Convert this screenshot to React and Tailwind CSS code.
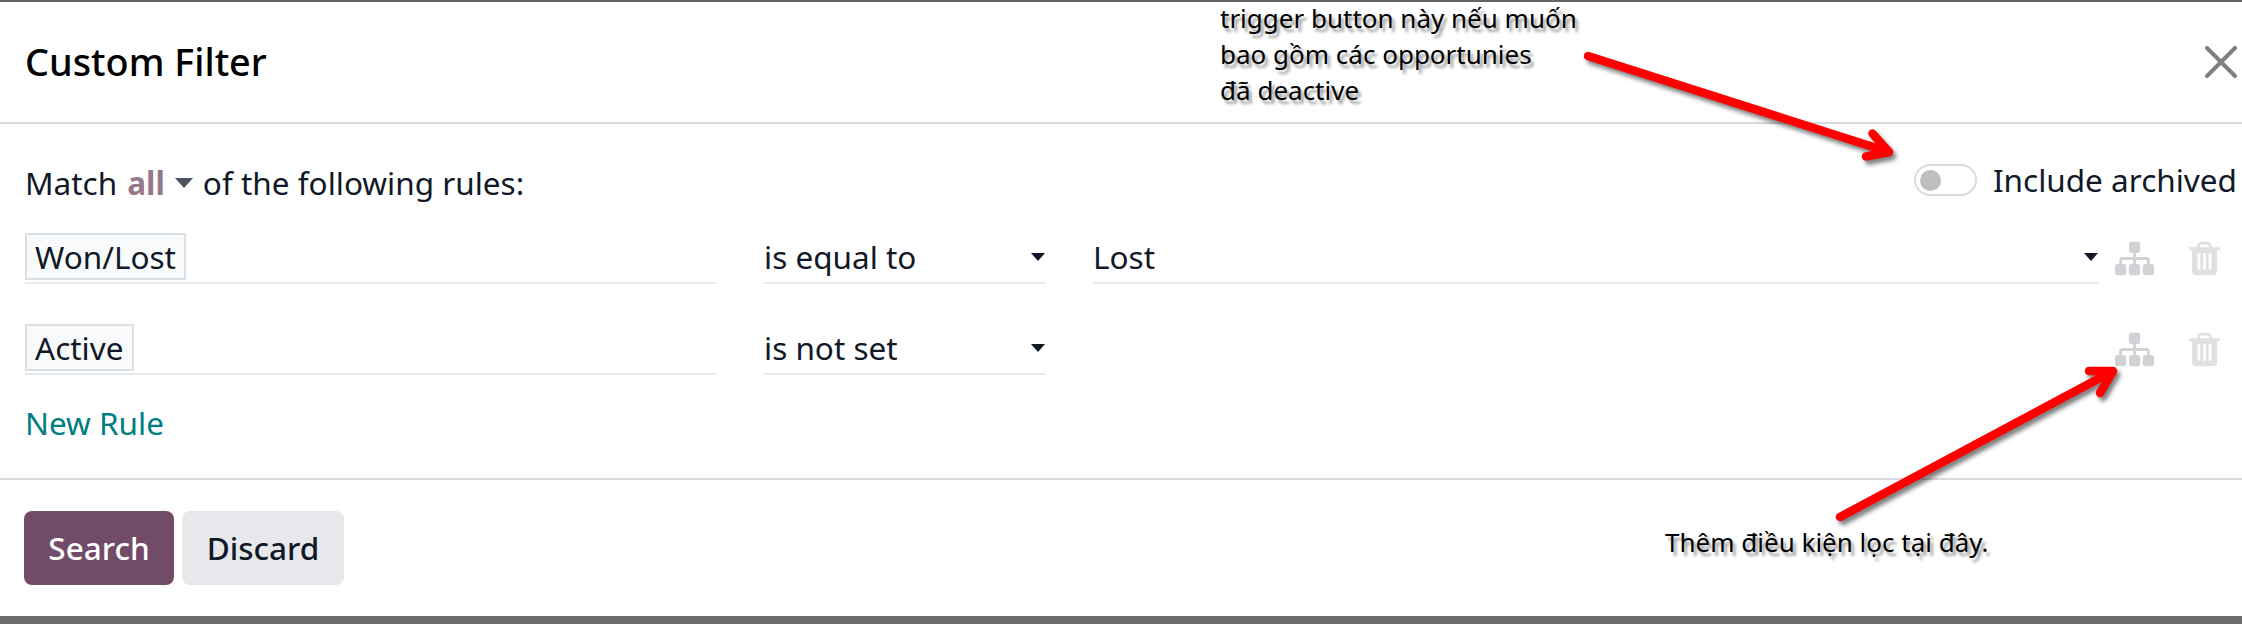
function Sitemap() {
  return (
    <svg className="h-[39px] w-[39px] text-[#d1d2d6]" viewBox="0 0 1792 1792" fill="currentColor">
      <path d="M1792 1248v320q0 40-28 68t-68 28h-320q-40 0-68-28t-28-68v-320q0-40 28-68t68-28h96v-192h-512v192h96q40 0 68 28t28 68v320q0 40-28 68t-68 28h-320q-40 0-68-28t-28-68v-320q0-40 28-68t68-28h96v-192h-512v192h96q40 0 68 28t28 68v320q0 40-28 68t-68 28h-320q-40 0-68-28t-28-68v-320q0-40 28-68t68-28h96v-192q0-52 38-90t90-38h512v-192h-96q-40 0-68-28t-28-68v-320q0-40 28-68t68-28h320q40 0 68 28t28 68v320q0 40-28 68t-68 28h-96v192h512q52 0 90 38t38 90v192h96q40 0 68 28t28 68z" />
    </svg>
  );
}

function Trash() {
  return (
    <svg className="h-[39px] w-[39px] text-[#dfe0e2]" viewBox="0 0 1792 1792" fill="currentColor">
      <path d="M704 1376v-704q0-14-9-23t-23-9h-64q-14 0-23 9t-9 23v704q0 14 9 23t23 9h64q14 0 23-9t9-23zm256 0v-704q0-14-9-23t-23-9h-64q-14 0-23 9t-9 23v704q0 14 9 23t23 9h64q14 0 23-9t9-23zm256 0v-704q0-14-9-23t-23-9h-64q-14 0-23 9t-9 23v704q0 14 9 23t23 9h64q14 0 23-9t9-23zm-544-992h448l-48-117q-7-9-17-11h-317q-10 2-17 11zm928 32v64q0 14-9 23t-23 9h-96v948q0 83-47 143.5t-113 60.5h-832q-66 0-113-58.5t-47-141.5v-952h-96q-14 0-23-9t-9-23v-64q0-14 9-23t23-9h309l70-167q15-37 54-63t79-26h320q40 0 79 26t54 63l70 167h309q14 0 23 9t9 23z" />
    </svg>
  );
}

function Caret() {
  return (
    <svg className="mt-px h-2 w-[14px] shrink-0" viewBox="0 0 14 8" fill="#111827">
      <path d="M0 0h14L7 8z" />
    </svg>
  );
}

function Select({ label, className }) {
  return (
    <div className={`flex h-[53px] items-center justify-between border-b-2 border-[#e7e8ec] ${className}`}>
      <span>{label}</span>
      <Caret />
    </div>
  );
}

function Rule({ field, operator, value }) {
  return (
    <div className="flex h-[53px]">
      <div className="flex h-[53px] w-[691px] items-start border-b-2 border-[#e7e8ec] pt-[2px]">
        <span className="flex h-[47px] items-center border-2 border-[#d9e0e6] bg-[#f9fafc] px-[8px]">{field}</span>
      </div>
      <Select label={operator} className="ml-12 w-[281px]" />
      <div className="ml-12 w-[1005px]">{value && <Select label={value} className="w-full" />}</div>
      <div className="ml-[17px] flex gap-[31px] pt-2">
        <Sitemap />
        <Trash />
      </div>
    </div>
  );
}

function Annotations() {
  return (
    <>
      <div className="absolute -top-[2px] left-[1220px] text-[26px] leading-9 whitespace-nowrap text-black [text-shadow:3px_4px_3px_rgba(0,0,0,0.4)]">
        trigger button này nếu muốn
        <br />
        bao gồm các opportunies
        <br />
        đã deactive
      </div>
      <div className="absolute top-[522px] left-[1665px] text-[26px] leading-9 whitespace-nowrap text-black [text-shadow:3px_4px_3px_rgba(0,0,0,0.4)]">
        Thêm điều kiện lọc tại đây.
      </div>
      <svg
        className="pointer-events-none absolute -top-[2px] left-0 [filter:drop-shadow(3px_4px_2px_rgba(0,0,0,0.5))]"
        width="2242"
        height="624"
        viewBox="0 0 2242 624"
        fill="none"
        stroke="#ff0000"
        strokeWidth="8.5"
        strokeLinecap="round"
        strokeLinejoin="round"
      >
        <path d="M1588 56L1889 152M1872.500 133.500L1889 152L1866 156.500" />
        <path d="M1840 517L2113 371M2089 371L2113 371L2100 393" />
      </svg>
    </>
  );
}

export default function App() {
  return (
    <div className="relative flex h-[624px] w-[2242px] flex-col overflow-hidden border-t-2 border-b-8 border-t-[#666465] border-b-[#6b6c6c] bg-white font-['Noto_Sans',sans-serif] text-[31.5px] leading-[43px] text-[#111827]">
      <header className="flex h-[122px] items-center justify-between border-b-2 border-[#d8dadf] pr-[5px] pl-[25px]">
        <h1 className="pb-[2px] text-[37.8px] font-medium text-black">Custom Filter</h1>
        <svg className="h-8 w-8" viewBox="0 0 32 32" stroke="#7f7f7f" strokeWidth="4" strokeLinecap="round">
          <path d="M2 2L30 30M30 2L2 30" />
        </svg>
      </header>
      <main className="flex h-[356px] flex-col border-b-2 border-[#d8dadf] pl-[25px]">
        <div className="flex h-[107px] justify-between pr-[5px]">
          <div className="flex items-center pt-[10px]">
            <span>Match</span>
            <span className="ml-[10px] font-bold text-[#96778c]">all</span>
            <svg className="mr-[10px] ml-[10px] h-[10px] w-[18px]" viewBox="0 0 18 10" fill="#515662">
              <path d="M0 0h18L9 10z" />
            </svg>
            <span>of the following rules:</span>
          </div>
          <div className="flex items-center gap-4 pt-[5px]">
            <span className="flex h-8 w-[63px] items-center rounded-full border-2 border-[#d8dadf] px-[4px]">
              <span className="size-[21px] rounded-full bg-[#bfbfbf]" />
            </span>
            <span className="-mt-[2px]">Include archived</span>
          </div>
        </div>
        <Rule field="Won/Lost" operator="is equal to" value="Lost" />
        <div className="h-[38px] shrink-0" />
        <Rule field="Active" operator="is not set" />
        <a className="mt-[26px] text-[#017e84]">New Rule</a>
      </main>
      <footer className="flex gap-2 pt-[31px] pl-6 font-medium">
        <button className="h-[74px] w-[150px] rounded-lg bg-[#714b67] pb-[2px] text-white">Search</button>
        <button className="h-[74px] w-[162px] rounded-lg bg-[#e7e8ec] pb-[2px]">Discard</button>
      </footer>
      <Annotations />
    </div>
  );
}
